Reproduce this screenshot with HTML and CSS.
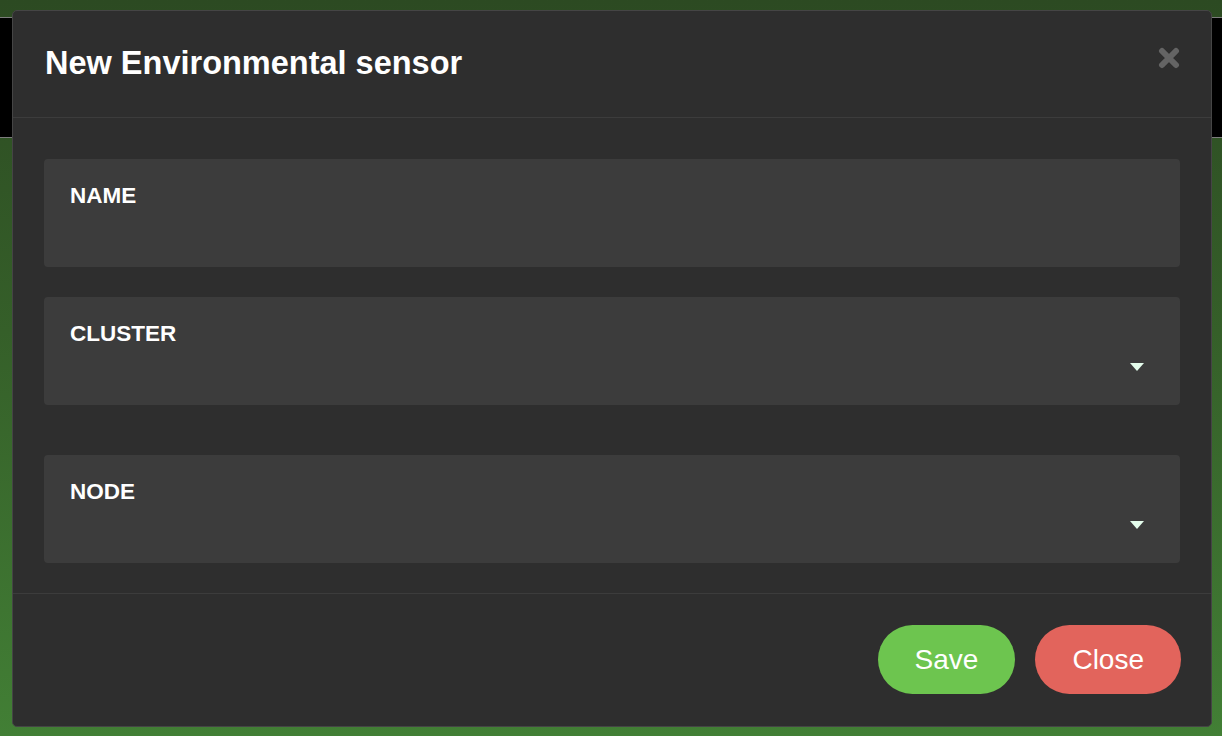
FILE: index.html
```
<!DOCTYPE html>
<html lang="en">
<head>
<meta charset="utf-8">
<title>New Environmental sensor</title>
<link rel="stylesheet" href="styles.css">
</head>
<body>
<div class="topbar"></div>

<div class="modal">
  <div class="modal-header">
    <h2 class="modal-title">New Environmental sensor</h2>
    <button class="modal-x" aria-label="Close">
      <svg width="22" height="22" viewBox="0 0 22 22"><path d="M4 4 L18 18 M18 4 L4 18" stroke="#646464" stroke-width="6" stroke-linecap="round"/></svg>
    </button>
  </div>
  <div class="modal-body">
    <div class="field">
      <label class="field-label">NAME</label>
    </div>
    <div class="field field-select">
      <label class="field-label">CLUSTER</label>
      <span class="caret"></span>
    </div>
    <div class="field field-select">
      <label class="field-label">NODE</label>
      <span class="caret"></span>
    </div>
  </div>
  <div class="modal-footer">
    <button class="btn btn-save">Save</button>
    <button class="btn btn-close">Close</button>
  </div>
</div>
</body>
</html>
```

FILE: styles.css
```
html, body {
  margin: 0;
  padding: 0;
  height: 100%;
}
body {
  font-family: "Liberation Sans", Arial, sans-serif;
  background: linear-gradient(180deg, #2c4a22 0%, #355f29 45%, #427f35 100%);
  overflow: hidden;
}
.topbar {
  margin-top: 17px;
  height: 119px;
  background: #000;
  border-top: 1px solid #7c7c7c;
  border-bottom: 1px solid #7c7c7c;
}
.modal {
  position: absolute;
  left: 12px;
  top: 10px;
  width: 1198px;
  height: 715px;
  background: #2e2e2e;
  border: 1px solid #454545;
  border-radius: 5px;
  display: flex;
  flex-direction: column;
}
.modal-header {
  position: relative;
  padding: 34px 32px 36px 32px;
  border-bottom: 1px solid #3c3c3c;
}
.modal-title {
  margin: 0;
  font-size: 32.5px;
  line-height: 36px;
  font-weight: bold;
  color: #fff;
}
.modal-x {
  position: absolute;
  right: 31px;
  top: 36px;
  width: 22px;
  height: 22px;
  padding: 0;
  border: 0;
  background: none;
}
.modal-x svg { display: block; }
.modal-body {
  display: flex;
  flex-direction: column;
  padding: 41px 31px 30px 31px;
  border-bottom: 1px solid #3c3c3c;
}
.field {
  position: relative;
  height: 108px;
  box-sizing: border-box;
  background: #3c3c3c;
  border-radius: 4px;
  padding: 24px 26px;
  margin-bottom: 30px;
}
.field-select + .field-select { margin-top: 20px; }
.field:last-child { margin-bottom: 0; }
.field-label {
  display: block;
  font-size: 22.5px;
  line-height: 26px;
  font-weight: bold;
  color: #fff;
}
.caret {
  position: absolute;
  right: 36px;
  top: 66px;
  width: 0;
  height: 0;
  border-left: 7px solid transparent;
  border-right: 7px solid transparent;
  border-top: 8px solid #e4fdec;
}
.modal-footer {
  flex: 1;
  display: flex;
  justify-content: flex-end;
  align-items: flex-start;
  gap: 20px;
  padding: 31px 30px 0 30px;
}
.btn {
  height: 69px;
  padding: 0 37px;
  border: 0;
  border-radius: 35px;
  font-family: "Liberation Sans", Arial, sans-serif;
  font-size: 28px;
  color: #fff;
}
.btn-save { background: #6dc54f; }
.btn-close { background: #e2645c; }
```
